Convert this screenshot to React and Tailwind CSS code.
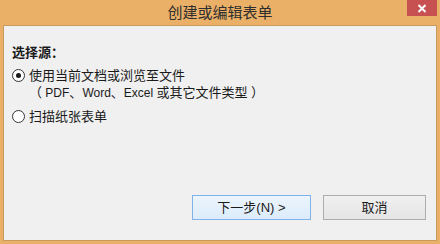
import React from "react";

function Radio({ checked }) {
  return (
    <div className="w-[13px] h-[13px] rounded-full border border-[#333] bg-white flex items-center justify-center shrink-0">
      {checked && <div className="w-[5px] h-[5px] rounded-full bg-[#1a1a1a]" />}
    </div>
  );
}

export default function App() {
  const font = { fontFamily: '"Liberation Sans", "Noto Sans CJK SC", sans-serif' };
  return (
    <div className="w-[440px] h-[244px] bg-[#ebb067] flex flex-col text-[#1a1a1a]" style={font}>
      <div className="h-[25px] relative flex items-center justify-center shrink-0">
        <span className="text-[15px] leading-none text-[#2e2e2e]">创建或编辑表单</span>
        <div className="absolute right-[3px] top-0 w-[30px] h-[16px] bg-[#c75050] flex items-center justify-center">
          <svg width="10" height="9" viewBox="0 0 10 9">
            <path d="M1.5 1 L8.5 8 M8.5 1 L1.5 8" stroke="#fff" strokeWidth="2" />
          </svg>
        </div>
      </div>
      <div className="flex-1 mx-[3px] mb-[3px] border border-[#c99a5d] bg-[#f0f0f0] flex flex-col pl-[8px] pr-[10px] pt-[19px] pb-[20px]">
        <div className="text-[13px] leading-[16px] font-bold">选择源：</div>
        <div className="mt-[6px] flex items-center gap-[4px] h-[17px]">
          <Radio checked />
          <span className="text-[13px] leading-[17px]">使用当前文档或浏览至文件</span>
        </div>
        <div className="pl-[17px] text-[13px] leading-[17px] whitespace-nowrap">
          （<span className="text-[12px]"> PDF</span>、<span className="text-[12px]">Word</span>、<span className="text-[12px]">Excel </span>或其它文件类型<span className="text-[12px]"> </span>）
        </div>
        <div className="mt-[6px] flex items-center gap-[4px] h-[17px]">
          <Radio />
          <span className="text-[13px] leading-[17px]">扫描纸张表单</span>
        </div>
        <div className="mt-auto flex justify-end gap-[12px]">
          <div className="w-[119px] h-[25px] border border-[#7eb4ea] bg-gradient-to-b from-[#ecf4fc] to-[#dcecfc] flex items-center justify-center text-[13px]">
            下一步(N) &gt;
          </div>
          <div className="w-[103px] h-[25px] border border-[#adadad] bg-gradient-to-b from-[#f0f0f0] to-[#e5e5e5] flex items-center justify-center text-[13px]">
            取消
          </div>
        </div>
      </div>
    </div>
  );
}
